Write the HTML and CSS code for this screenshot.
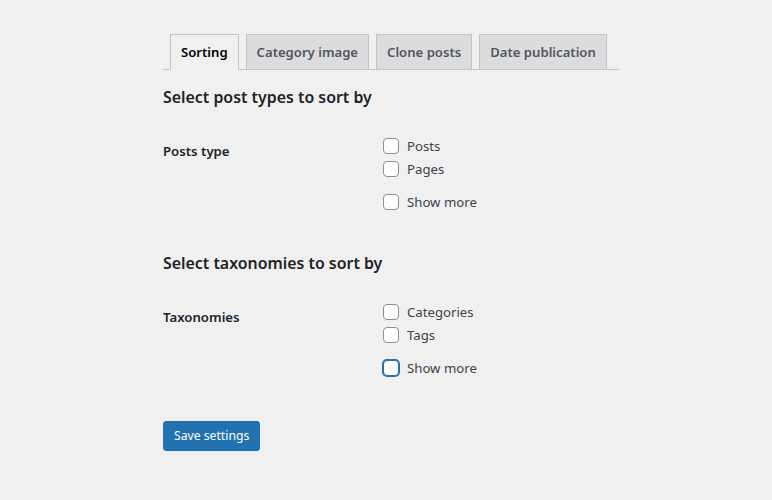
FILE: index.html
```html
<!DOCTYPE html>
<html lang="en">
<head>
<meta charset="utf-8">
<title>Settings</title>
<link rel="stylesheet" href="styles.css">
</head>
<body>
<div class="wrap">
  <nav class="tabs">
    <a class="tab active">Sorting</a>
    <a class="tab">Category image</a>
    <a class="tab">Clone posts</a>
    <a class="tab tab-last">Date publication</a>
  </nav>

  <section class="section">
    <h2 class="title">Select post types to sort by</h2>
    <div class="row">
      <div class="th">Posts type</div>
      <div class="td">
        <label class="item"><span class="box"></span>Posts</label>
        <label class="item"><span class="box"></span>Pages</label>
        <label class="item more"><span class="box"></span>Show more</label>
      </div>
    </div>
  </section>

  <section class="section second">
    <h2 class="title">Select taxonomies to sort by</h2>
    <div class="row">
      <div class="th">Taxonomies</div>
      <div class="td">
        <label class="item"><span class="box"></span>Categories</label>
        <label class="item"><span class="box"></span>Tags</label>
        <label class="item more"><span class="box focus"></span>Show more</label>
      </div>
    </div>
  </section>

  <button class="save">Save settings</button>
</div>
</body>
</html>
```

FILE: styles.css
```css
html, body {
  margin: 0;
  padding: 0;
  background: #f0f0f1;
}
body {
  font-family: "Noto Sans", "Open Sans", sans-serif;
  color: #3c434a;
  font-size: 14px;
}
.wrap {
  width: 456px;
  margin-left: 163px;
  padding-top: 34px;
}
.tabs {
  display: flex;
  padding-left: 7px;
  border-bottom: 1px solid #c3c4c7;
}
.tab {
  display: block;
  margin-right: 7px;
  margin-bottom: -1px;
  padding: 5px 10px;
  font-size: 13.12px;
  line-height: 24px;
  font-weight: 600;
  color: #50575e;
  background: #dcdcde;
  border: 1px solid #c3c4c7;
  white-space: nowrap;
}
.tab.active {
  background: #f0f0f1;
  color: #000;
  border-bottom-color: #f0f0f1;
}
.title {
  margin: 15px 0 0;
  font-size: 15.9px;
  line-height: 24px;
  font-weight: 600;
  color: #1d2327;
}
.second .title {
  margin-top: 38px;
}
.row {
  display: flex;
  margin-top: 25px;
}
.th {
  width: 220px;
  padding-top: 5px;
  font-weight: 600;
  font-size: 13.2px;
  line-height: 24px;
  color: #1d2327;
}
.td {
  display: flex;
  flex-direction: column;
}
.item {
  display: flex;
  align-items: center;
  height: 23px;
  font-size: 13.2px;
  color: #3c434a;
}
.item.more {
  margin-top: 10px;
}
.box {
  box-sizing: border-box;
  width: 16px;
  height: 16px;
  margin-right: 8px;
  border: 1px solid #8c8f94;
  border-radius: 4px;
  background: #fff;
}
.box.focus {
  border-color: #2271b1;
  box-shadow: 0 0 0 1px #2271b1;
}
.save {
  display: block;
  margin-top: 42px;
  height: 30px;
  padding: 0 10px;
  font-family: "Noto Sans", "Open Sans", sans-serif;
  font-size: 12.2px;
  line-height: 28px;
  color: #fff;
  background: #2271b1;
  border: 1px solid #2271b1;
  border-radius: 3px;
}
```
